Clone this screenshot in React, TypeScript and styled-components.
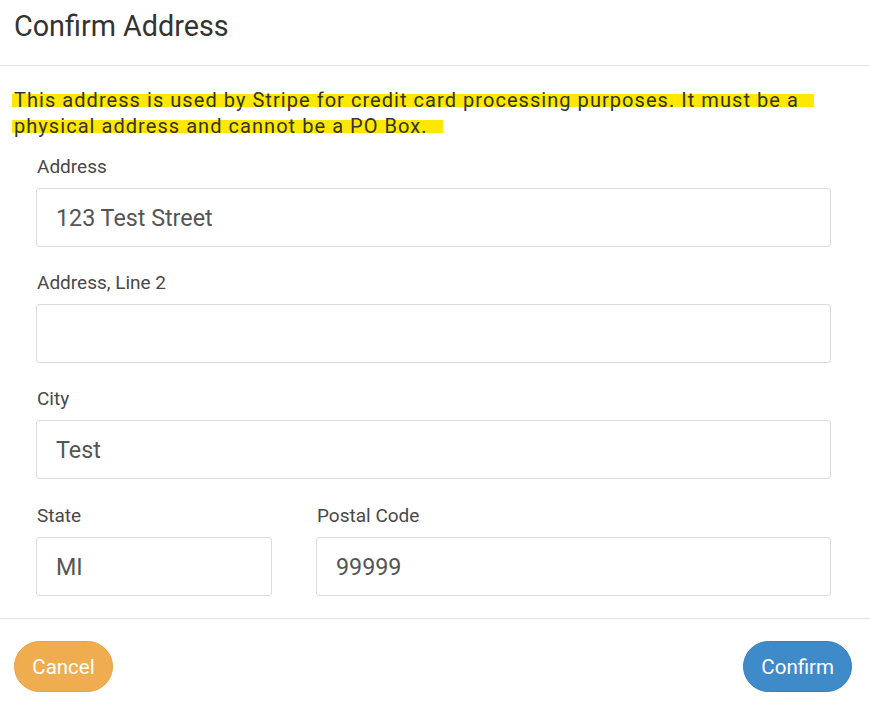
import React from "react";
import styled, { createGlobalStyle } from "styled-components";

const Global = createGlobalStyle`
  html, body { margin: 0; padding: 0; background: #fff; }
  body { font-family: Roboto, "Noto Sans", Arial, sans-serif; }
  * { box-sizing: border-box; }
`;

const Dialog = styled.div`
  width: 870px;
  height: 703px;
  display: flex;
  flex-direction: column;
  background: #fff;
`;

const Header = styled.div`
  height: 66px;
  padding: 8px 14px 0;
  border-bottom: 1px solid #e3e3e3;
`;

const Title = styled.h1`
  margin: 0;
  font-size: 28.75px;
  font-weight: 400;
  color: #333;
  line-height: 36px;
`;

const Body = styled.div`
  padding: 21px 39px 0 12px;
  height: 553px;
  border-bottom: 1px solid #e3e3e3;
`;

const Notice = styled.p`
  margin: 0 0 17px;
  font-size: 20px;
  line-height: 26px;
  letter-spacing: 1.05px;
  color: #333;
`;

const Mark = styled.span`
  background: linear-gradient(to bottom, transparent 25%, #ffe800 25%, #ffe800 78%, transparent 78%);
  padding: 0 15px 0 2px;
  box-decoration-break: clone;
  -webkit-box-decoration-break: clone;
`;

const Form = styled.div`
  padding-left: 24px;
  display: flex;
  flex-direction: column;
  gap: 25px;
`;

const Row = styled.div`
  display: flex;
  gap: 44px;
  margin-top: 1px;
`;

const Field = styled.div<{ $w?: string }>`
  display: flex;
  flex-direction: column;
  flex: ${(p) => p.$w ?? "1"};
`;

const Label = styled.label`
  font-size: 19px;
  line-height: 22px;
  color: #484848;
  margin-bottom: 10px;
  padding-left: 1px;
`;

const Input = styled.div`
  height: 59px;
  border: 1px solid #dcdcdc;
  border-radius: 3px;
  padding: 0 19px;
  display: flex;
  align-items: center;
  font-size: 23.3px;
  color: #555;
`;

const Footer = styled.div`
  flex: 1;
  display: flex;
  justify-content: space-between;
  align-items: flex-start;
  padding: 22px 18px 0 14px;
`;

const Button = styled.button<{ $color: string; $border: string }>`
  height: 51px;
  min-width: 99px;
  border-radius: 26px;
  border: 1px solid ${(p) => p.$border};
  background: ${(p) => p.$color};
  color: #fff;
  font-family: Roboto, Arial, sans-serif;
  font-size: 20.5px;
  padding: 0 17px;
  cursor: pointer;
`;

export default function App() {
  return (
    <>
      <Global />
      <Dialog>
        <Header>
          <Title>Confirm Address</Title>
        </Header>
        <Body>
          <Notice>
            <Mark>
              This address is used by Stripe for credit card processing purposes. It must be a physical address and cannot be a PO Box.
            </Mark>
          </Notice>
          <Form>
            <Field>
              <Label>Address</Label>
              <Input>123 Test Street</Input>
            </Field>
            <Field>
              <Label>Address, Line 2</Label>
              <Input />
            </Field>
            <Field>
              <Label>City</Label>
              <Input>Test</Input>
            </Field>
            <Row>
              <Field $w="0 0 236px">
                <Label>State</Label>
                <Input>MI</Input>
              </Field>
              <Field>
                <Label>Postal Code</Label>
                <Input>99999</Input>
              </Field>
            </Row>
          </Form>
        </Body>
        <Footer>
          <Button $color="#efad4f" $border="#e9a23e">Cancel</Button>
          <Button $color="#3f8bc9" $border="#3a7fb8">Confirm</Button>
        </Footer>
      </Dialog>
    </>
  );
}
